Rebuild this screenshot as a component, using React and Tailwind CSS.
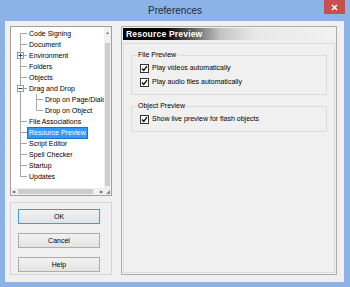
import React from "react";

const LINE = "#a6a6a6";

function Guide({ kind, expander }) {
	// kind: first | mid | last | pass | none
	const y1 = kind === "first" ? 5.5 : 0;
	const y2 = kind === "last" ? 5.5 : 11;
	return (
		<svg width="16" height="11" className="shrink-0">
			{kind !== "none" && <line x1="9.5" y1={y1} x2="9.5" y2={y2} stroke={LINE} />}
			{kind !== "pass" && kind !== "none" && <line x1="9.5" y1="5.5" x2="16" y2="5.5" stroke={LINE} />}
			{expander && (
				<g>
					<rect x="6.5" y="2.5" width="6" height="6" fill="#fff" stroke="#8c9bb0" />
					<line x1="7.5" y1="5.5" x2="11.5" y2="5.5" stroke="#2a3b5a" />
					{expander === "+" && <line x1="9.5" y1="3.5" x2="9.5" y2="7.5" stroke="#2a3b5a" />}
				</g>
			)}
		</svg>
	);
}

const tree = [
	{ label: "Code Signing", kind: "first" },
	{ label: "Document", kind: "mid" },
	{ label: "Environment", kind: "mid", expander: "+" },
	{ label: "Folders", kind: "mid" },
	{ label: "Objects", kind: "mid" },
	{ label: "Drag and Drop", kind: "mid", expander: "-" },
	{ label: "Drop on Page/Dialog", kind: "mid", child: true },
	{ label: "Drop on Object", kind: "last", child: true },
	{ label: "File Associations", kind: "mid" },
	{ label: "Resource Preview", kind: "mid", selected: true },
	{ label: "Script Editor", kind: "mid" },
	{ label: "Spell Checker", kind: "mid" },
	{ label: "Startup", kind: "mid" },
	{ label: "Updates", kind: "last" },
];

function TreeRow({ item }) {
	return (
		<div className="flex items-center h-[11px] whitespace-nowrap">
			{item.child ? (
				<>
					<Guide kind="pass" />
					<Guide kind={item.kind} />
				</>
			) : (
				<Guide kind={item.kind} expander={item.expander} />
			)}
			<span
				className={
					"ml-[1px] px-[1px] leading-[10px] " +
					(item.selected ? "bg-[#3399ff] text-white outline outline-1 outline-[#1e6fd0]" : "text-black")
				}
			>
				{item.label}
			</span>
		</div>
	);
}

function Check({ label }) {
	return (
		<div className="flex items-center gap-[3px] h-[14px]">
			<span className="w-[9px] h-[9px] border border-[#333] bg-white flex items-center justify-center">
				<svg width="7" height="7" viewBox="0 0 7 7">
					<path d="M1 3.5 L2.8 5.5 L6 1.2" fill="none" stroke="#111" strokeWidth="1.4" />
				</svg>
			</span>
			<span className="text-black">{label}</span>
		</div>
	);
}

function Group({ title, children }) {
	return (
		<div className="relative border border-[#dcdcdc] pt-[5px] pb-[5px] pl-[8px]">
			<span className="absolute -top-[6px] left-[5px] bg-[#f0f0f0] px-[1px] leading-[10px] text-black">{title}</span>
			{children}
		</div>
	);
}

function Button({ children, primary }) {
	return (
		<button
			className={
				"h-[15px] w-[82px] text-black leading-none bg-[linear-gradient(#f2f2f2,#e3e3e3)] border " +
				(primary ? "border-[#3c9be8]" : "border-[#acacac]")
			}
		>
			{children}
		</button>
	);
}

export default function App() {
	return (
		<div
			className="w-[350px] h-[287px] bg-[#8cb3e8] flex flex-col text-[7px]"
			style={{ fontFamily: '"Liberation Sans", Arial, sans-serif' }}
		>
			<div className="h-[21px] flex items-start shrink-0">
				<div className="flex-1 h-[21px] flex items-center justify-center pl-[26px] text-[10px] text-[#1e2b3c]">
					Preferences
				</div>
				<div className="w-[21px] h-[14px] mr-[5px] bg-[#c74f4f] flex items-center justify-center">
					<svg width="7" height="7" viewBox="0 0 7 7">
						<path d="M1 1 L6 6 M6 1 L1 6" stroke="#fff" strokeWidth="1.6" />
					</svg>
				</div>
			</div>

			<div className="flex-1 ml-[5px] mr-[6px] mb-[5px] bg-[#f0f0f0] flex gap-[9px] pl-[5px] pr-[7px] pt-[5px] pb-[7px]">
				<div className="w-[102px] flex flex-col gap-[6px]">
					<div className="h-[170px] border border-[#a0a0a0] bg-white flex flex-col">
						<div className="flex-1 flex min-h-0">
							<div className="flex-1 overflow-hidden pt-[1px]">
								{tree.map((it) => (
									<TreeRow key={it.label} item={it} />
								))}
							</div>
							<div className="w-[7px] bg-[#f0f0f0] flex flex-col items-center">
								<span className="text-[4px] leading-[8px] text-[#606060] mt-[2px]">▲</span>
								<div className="w-[5px] flex-1 bg-[#cdcdcd] mt-[6px] mb-[2px]" />
							</div>
						</div>
						<div className="h-[7px] flex bg-[#f0f0f0]">
							<span className="text-[4px] leading-[7px] text-[#606060] ml-[1px]">◀</span>
							<div className="h-[5px] self-center ml-[3px] w-[75px] bg-[#cdcdcd]" />
							<div className="flex-1" />
							<span className="text-[4px] leading-[7px] text-[#606060] mr-[1px]">▶</span>
							<div className="w-[7px] flex items-end justify-end">
								<svg width="5" height="5" viewBox="0 0 5 5">
									<path d="M4 0 V4 H0 Z" fill="#8a8a8a" />
								</svg>
							</div>
						</div>
					</div>
					<div className="flex-1 border border-[#d5d5d5] flex flex-col items-start gap-[9px] pl-[7px] pt-[6px]">
						<Button primary>OK</Button>
						<Button>Cancel</Button>
						<Button>Help</Button>
					</div>
				</div>

				<div className="flex-1 border border-[#adadad] flex flex-col p-[1px]">
					<div className="h-[12px] bg-[linear-gradient(to_right,#000_0%,#000_20%,#5a5a5a_32%,#c4c4c4_46%,#e8e8e8_62%,#f2f2f2_100%)] flex items-center pl-[3px]">
						<span className="text-white font-bold text-[8.5px] tracking-[0.2px]">Resource Preview</span>
					</div>
					<div className="flex-1 mt-[3px] border border-[#dcdcdc] px-[7px] pt-[11px] flex flex-col gap-[11px]">
						<Group title="File Preview">
							<Check label="Play videos automatically" />
							<Check label="Play audio files automatically" />
						</Group>
						<Group title="Object Preview">
							<Check label="Show live preview for flash objects" />
						</Group>
					</div>
				</div>
			</div>
		</div>
	);
}
